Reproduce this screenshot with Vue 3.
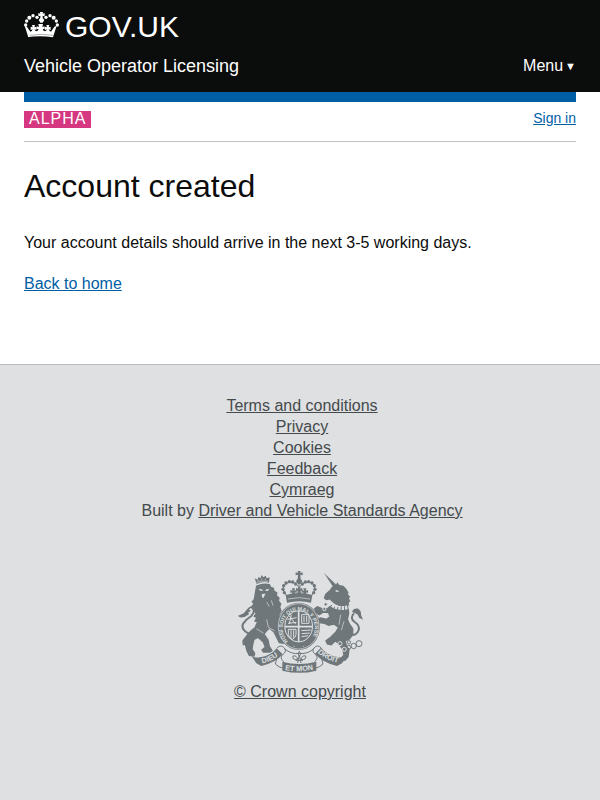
<script setup>
const footerLinks = ['Terms and conditions', 'Privacy', 'Cookies', 'Feedback', 'Cymraeg']
const crownBeads = [
  [77, 75, 5], [80, 63, 5], [88, 53, 6], [99, 47, 5], [111, 52, 5],
  [138, 52, 5], [150, 47, 5], [161, 53, 6], [169, 63, 5], [172, 75, 5],
]
const crestBeads = [
  [163, 92], [159, 82], [161, 71], [168, 63], [178, 59], [188, 60], [197, 66],
  [217, 66], [226, 60], [236, 59], [246, 63], [253, 71], [255, 82], [251, 92],
]
</script>

<template>
  <div class="page">
    <header class="header">
      <div class="brand-row">
        <a class="brand" href="#" aria-label="GOV.UK">
          <svg class="crown" viewBox="72 36 105 78" aria-hidden="true">
            <g fill="#fff">
              <circle v-for="(b, i) in crownBeads" :key="i" :cx="b[0]" :cy="b[1]" :r="b[2]" />
              <path d="M120 36h9l-1 5 6-2v10l-6-2v7l5 6-5 8h-7l-5-8 5-6v-7l-6 2v-10l6 2z" />
              <path d="M85 112l-11-35q8 2 11 9l6 9q5 0 7-7l-6 2v-10l6 2-2-7h9l-2 7 6-2v10l-6-2q2 6 7 6 5-1 6-7l-6 1v-9l7 2-2-9h14l-2 9 7-2v9l-6-1q1 6 6 7 5 0 7-6l-6 2v-10l6 2-2-7h9l-2 7 6-2v10l-6-2q2 7 7 7l6-9q3-7 11-9l-11 35q-40-6-79 0z" />
            </g>
            <path d="M89 106q36-6 71 0" fill="none" stroke="#0b0c0c" stroke-width="1" />
          </svg>
          <span>GOV.UK</span>
        </a>
      </div>
      <div class="service-row">
        <a class="service" href="#">Vehicle Operator Licensing</a>
        <button class="menu" type="button">Menu <span class="arrow">▼</span></button>
      </div>
    </header>

    <div class="bar"></div>
    <div class="phase">
      <strong class="tag">ALPHA</strong>
      <a class="signin" href="#">Sign in</a>
    </div>

    <main class="main">
      <h1>Account created</h1>
      <p>Your account details should arrive in the next 3-5 working days.</p>
      <p><a href="#">Back to home</a></p>
    </main>

    <footer class="footer">
      <ul class="links">
        <li v-for="l in footerLinks" :key="l"><a href="#">{{ l }}</a></li>
        <li>Built by <a href="#">Driver and Vehicle Standards Agency</a></li>
      </ul>
      <a class="copyright" href="#">
        <svg class="crest" viewBox="24 27 375 306" aria-hidden="true">
          <defs>
            <path id="garter" d="M174 238A48 53 0 1 1 241 235" />
            <path id="dieu" d="M97 304Q128 298 151 276" />
            <path id="etmon" d="M165 324Q207 332 255 322" />
            <path id="droit" d="M263 272Q288 296 332 304" />
          </defs>
          <g class="ink">
            <!-- lion -->
            <path d="M80 66l-6-17 9 4 2-8 6 4 4-10 5 7 7-5 3 8 9-3-2 16q-18-5-37 4z" />
            <path class="body" d="M80 72q20-8 38-4l4 8 8 3 2 9 8 4-1 9 8 7-2 9 7 9-3 9 4 12-6 10 1 12-6 9 2 12 8 10-2 12 8 12 12 10-8 10-14-2-10-20-6-12-14-12-8 8-8 10 12 18 4 20 8 12-6 4-20 0-4-6 10-8-6-16-16-14-12 6-4 16-2 14 8 12-2 8-14-2-7-14-5-20-6 2-1-12 11-14 12-14 13-11 8-18-8-2 6-10-8-4 6-10-7-5 3-9-8-6 5-8-5-6 6-7z" />
            <path d="M58 216Q30 202 40 184Q48 172 64 162Q80 144 62 134" class="line wide" />
            <path d="M68 131l-11 12 6 3-9 6 4 4q-14 12-29 10l-5-5q17-4 23-14 8-13 21-16z" />
            <!-- unicorn -->
            <path d="M282 33l40 38-10 8z" />
            <path d="M306 74l12-6 4-7 6 8 12 2 9 9 7 12-3 3 8 10-4 3 4 11-5 2 2 12q-30 8-55-16l-3-4-12 2-7-7 5-13 13-11z" />
            <path class="body" d="M304 130l12 8 38-3 2 20-4 17 6 14 10 14v18l-11 14-12 4 6 20 6 6-3 22-9 11-14-4 11-11-3-18-14-18-9-8-12 12-12-2-4-10 14-10 16-16 8-14-14-10-16 4-12-6-16-2-6-10 10-4 18 4 10-8-4-12-16-2-12 8-10-6-4-12 8-6 14 6h16z" />
            <path d="M357 216Q380 224 386 204Q390 190 374 180Q358 168 372 154" class="line wide" />
            <path d="M366 150q4-12 17-10l-3-3q15 8 13 21l6 15-12-6q-4-12-12-13z" />
            <!-- shield and garter -->
            <ellipse cx="206" cy="193" rx="64" ry="71" />
            <!-- ribbon -->
            <path d="M64 281q12 8 26 5 32-4 50-27l18 18q-20 25-64 35l-15-8z" />
            <path d="M352 281q-12 8-26 5-34-5-53-29l-18 18q22 26 66 37l15-8z" />
            <path d="M157 299q49 14 102 0v27q-50 13-102 0z" />
            <!-- crown -->
            <path d="M203 26h9l-1 7 7-2v9l-7-2 1 12 5 8-6 8h-7l-6-8 5-8 1-12-7 2v-9l7 2z" />
            <path d="M167 99q40-12 80 0l-4 23q-36-9-72 0z" />
            <path d="M184 103l3-12-6 2v-9l7 2-2-7h9l-2 7 7-2v9l-6-2 2 8 6-3 1-10-5 1v-9l7 2-2-6h9l-2 6 7-2v9l-5-1 1 10 6 3 2-8-6 2v-9l7 2-2-7h9l-2 7 7-2v9l-6-2 3 12z" />
          </g>
          <path d="M171 103Q150 78 167 65Q187 51 205 73M243 103Q264 78 248 65Q228 51 210 73M207 60V104" class="line" />
          <circle v-for="(b, i) in crestBeads" :key="i" :cx="b[0]" :cy="b[1]" r="5" class="ink" />
          <g class="paper">
            <path d="M88 80l12 4-5 3-8-3zM109 81l9 1-5 5-7-1zM95 96l12-1-3 5-4 9-4-4z" />
            <path d="M320 84l8 4-7 2-6-3z" />
          </g>
          <path d="M292 116q24 30 65 19" class="collar" />
          <g class="cut">
            <path d="M80 61q16-6 34-3M84 53v4M95 50v4M106 50v4M174 111q34-8 66 0" stroke-width="2" />
            <ellipse cx="206" cy="193" rx="61" ry="68" stroke-width="2" />
            <ellipse cx="206" cy="193" rx="42" ry="47" />
            <path d="M206 147v92M165 194h82" stroke-width="5" />
            <path d="M172 172l28-5M174 184l25-3M177 161l20 25M184 158l-6 28M215 158h22v26h-22zM222 162v18M230 162v18M175 202h23v16q-2 10-11 14-10-5-12-14zM183 205v22M191 205v22M214 206l28-2M215 215l24-2M215 224l19-3" />
            <path d="M110 172l5 24 18 10M79 200l21 13M110 120l8 14M124 115l5 16M332 158l-5 30M342 178l-8 26M190 251l4 4M218 255l4-4" stroke-width="2" />
          </g>
          <g class="line">
            <path d="M203 303l5-24 5 24M208 283q-8-7 0-15 8 8 0 15M203 292q-17 3-14-10 11-3 14 10M213 292q17 3 14-10-11-3-14 10M197 295h22" />
            <path d="M141 258q12-12 22 0 8 10-4 19-12 10 2 22M142 282l-6 24q10 10 24 13M274 258q-12-12-22 0-8 10 4 19 12 10-2 22M273 282l6 24q-10 10-24 13M163 260q22 18 44 14 24 4 45-14" />
            <circle cx="357" cy="241" r="5" /><circle cx="356" cy="256" r="6" />
            <circle cx="371" cy="252" r="8" /><circle cx="387" cy="245" r="9" />
          </g>
          <g class="ring">
            <circle cx="287" cy="127" r="5" /><circle cx="283" cy="141" r="5" />
            <circle cx="330" cy="245" r="6" /><circle cx="343" cy="262" r="6" />
          </g>
          <g class="motto">
            <text font-size="16"><textPath href="#garter">HONI SOIT QUI MAL Y PENSE</textPath></text>
            <text font-size="22"><textPath href="#dieu">DIEU</textPath></text>
            <text font-size="22"><textPath href="#etmon">ET MON</textPath></text>
            <text font-size="22"><textPath href="#droit">DROIT</textPath></text>
          </g>
        </svg>
        <span>© Crown copyright</span>
      </a>
    </footer>
  </div>
</template>

<style>
body {
  margin: 0;
  background: #dee0e2;
}
</style>

<style scoped>
.page {
  min-height: 100vh;
  display: flex;
  flex-direction: column;
  background: #fff;
  color: #0b0c0c;
  font-family: "Liberation Sans", Arial, Helvetica, sans-serif;
  font-size: 16px;
  line-height: 20px;
}
a {
  color: #005ea5;
}
.header {
  background: #0b0c0c;
  padding: 8px 24px 16px;
}
.brand {
  display: inline-flex;
  align-items: center;
  gap: 6px;
  color: #fff;
  text-decoration: none;
  font-size: 30px;
  line-height: 38px;
}
.brand-row {
  display: flex;
}
.crown {
  width: 35px;
  height: 26px;
  margin-bottom: 4px;
}
.service-row {
  display: flex;
  justify-content: space-between;
  align-items: center;
  margin-top: 10px;
}
.service {
  color: #fff;
  font-size: 18px;
  text-decoration: none;
}
.menu {
  display: flex;
  align-items: center;
  gap: 2px;
  border: 0;
  padding: 0;
  background: none;
  color: #fff;
  font: inherit;
}
.arrow {
  font-size: 11px;
}
.bar {
  height: 10px;
  margin: 0 24px;
  background: #005ea5;
}
.phase {
  display: flex;
  justify-content: space-between;
  align-items: flex-start;
  margin: 0 24px;
  padding: 6px 0 13px;
  border-bottom: 1px solid #bfc1c3;
}
.tag {
  margin-top: 3px;
  padding: 0 5px 2px;
  background: #d53880;
  color: #fff;
  font-weight: 400;
  letter-spacing: 1px;
  line-height: 15px;
}
.signin {
  font-size: 14px;
}
.main {
  padding: 27px 24px 70px;
}
h1 {
  margin: 0 0 29px;
  font-size: 32px;
  line-height: 35px;
  font-weight: 400;
}
.main p {
  margin: 0 0 21px;
}
.main p:last-child {
  margin: 0;
}
.footer {
  flex: 1;
  display: flex;
  flex-direction: column;
  align-items: center;
  gap: 50px;
  padding: 30px 24px;
  border-top: 1px solid #bbbec1;
  background: #dee0e2;
  color: #454a4c;
}
.footer a {
  color: #454a4c;
}
.links {
  list-style: none;
  margin: 0;
  padding: 0 0 0 4px;
  text-align: center;
  line-height: 21px;
}
.copyright {
  display: flex;
  flex-direction: column;
  align-items: center;
  gap: 9px;
}
.crest {
  width: 125px;
  height: 102px;
}
.ink {
  fill: #6f777b;
}
.body {
  stroke: #6f777b;
  stroke-width: 4;
}
.paper {
  fill: #dee0e2;
}
.cut {
  fill: none;
  stroke: #dee0e2;
  stroke-width: 3;
}
.collar {
  fill: none;
  stroke: #dee0e2;
  stroke-width: 12;
  stroke-dasharray: 7 3;
}
.line {
  fill: none;
  stroke: #6f777b;
  stroke-width: 3;
}
.ring {
  fill: #6f777b;
  stroke: #dee0e2;
  stroke-width: 3;
}
.wide {
  stroke-width: 6;
}
.motto {
  fill: #dee0e2;
  font-weight: 700;
}
</style>
